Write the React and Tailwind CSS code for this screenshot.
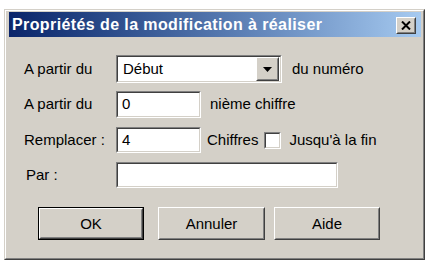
import React from "react";

const font = { fontFamily: '"Liberation Sans", Arial, sans-serif' };

function Sunken({ className = "", inner = "", children }) {
  return (
    <div className={`border border-t-[#808080] border-l-[#808080] border-b-white border-r-white ${className}`}>
      <div className={`h-full w-full border border-t-[#404040] border-l-[#404040] border-b-[#d4d0c8] border-r-[#d4d0c8] bg-white ${inner}`}>
        {children}
      </div>
    </div>
  );
}

function Raised({ className = "", inner = "", children }) {
  return (
    <div className={`border border-t-white border-l-white border-b-[#404040] border-r-[#404040] bg-[#d4d0c8] ${className}`}>
      <div className={`h-full w-full border border-t-[#d4d0c8] border-l-[#d4d0c8] border-b-[#808080] border-r-[#808080] ${inner}`}>
        {children}
      </div>
    </div>
  );
}

function Button({ label, isDefault = false, className = "" }) {
  if (isDefault) {
    return (
      <div className={`border border-black ${className}`}>
        <Raised className="h-full w-full" inner="flex items-center justify-center">
          <span className="text-[15px] leading-none text-black">{label}</span>
        </Raised>
      </div>
    );
  }
  return (
    <Raised className={className} inner="flex items-center justify-center">
      <span className="text-[15px] leading-none text-black">{label}</span>
    </Raised>
  );
}

export default function App() {
  return (
    <div className="h-[262px] w-[429px] bg-white pl-[4px] pt-[9px]" style={font}>
      <div className="h-[251px] w-[421px] border border-t-[#d4d0c8] border-l-[#d4d0c8] border-b-[#404040] border-r-[#404040] bg-[#d4d0c8]">
        <div className="flex h-full w-full flex-col border border-t-white border-l-white border-b-[#808080] border-r-[#808080] pl-[3px] pr-[2px] pt-[1px]">
          {/* Title bar */}
          <div className="flex h-[25px] items-center justify-between bg-gradient-to-r from-[#0a246a] to-[#a6caf0] pl-[3px] pr-[5px]">
            <span className="text-[16px] font-bold leading-none tracking-[0.4px] text-white">
              Propriétés de la modification à réaliser
            </span>
            <Raised className="mt-[1px] h-[17px] w-[20px]" inner="flex items-center justify-center">
              <svg width="10" height="9" viewBox="0 0 10 9">
                <path d="M1 0.5 L9 8.5 M9 0.5 L1 8.5" stroke="#000" strokeWidth="2" />
              </svg>
            </Raised>
          </div>

          {/* Body */}
          <div className="flex flex-col pl-[15px] pt-[18px] text-[15px] text-black">
            {/* Row 1 */}
            <div className="flex h-[28px] items-center">
              <span className="w-[92px]">A partir du</span>
              <Sunken className="h-[28px] w-[166px]" inner="flex items-center justify-between pl-[5px] pr-[1px]">
                <span>Début</span>
                <Raised className="h-[24px] w-[23px]" inner="flex items-center justify-center">
                  <svg width="9" height="5" viewBox="0 0 9 5">
                    <path d="M0 0 H9 L4.5 5 Z" fill="#000" />
                  </svg>
                </Raised>
              </Sunken>
              <span className="ml-[10px]">du numéro</span>
            </div>

            {/* Row 2 */}
            <div className="mt-[8px] flex h-[27px] items-center">
              <span className="w-[92px]">A partir du</span>
              <Sunken className="h-[27px] w-[85px]" inner="flex items-center pl-[4px]">
                <span>0</span>
              </Sunken>
              <span className="ml-[9px]">nième chiffre</span>
            </div>

            {/* Row 3 */}
            <div className="mt-[9px] flex h-[26px] items-center">
              <span className="w-[92px]">Remplacer :</span>
              <Sunken className="h-[26px] w-[85px]" inner="flex items-center pl-[4px]">
                <span>4</span>
              </Sunken>
              <span className="ml-[6px]">Chiffres</span>
              <Sunken className="ml-[6px] h-[17px] w-[17px]" />
              <span className="ml-[8px]">Jusqu'à la fin</span>
            </div>

            {/* Row 4 */}
            <div className="mt-[9px] flex h-[26px] items-center">
              <span className="w-[92px] pl-[2px]">Par :</span>
              <Sunken className="h-[26px] w-[222px]" />
            </div>

            {/* Buttons */}
            <div className="mt-[19px] flex h-[33px] pl-[14px]">
              <Button label="OK" isDefault className="h-[33px] w-[106px]" />
              <Button label="Annuler" className="ml-[14px] h-[33px] w-[107px]" />
              <Button label="Aide" className="ml-[9px] h-[33px] w-[106px]" />
            </div>
          </div>
        </div>
      </div>
    </div>
  );
}
